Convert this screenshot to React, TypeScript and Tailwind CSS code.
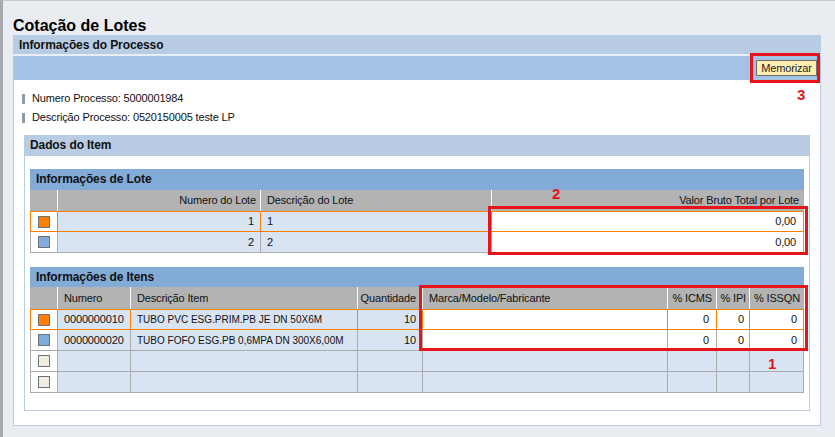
import React from "react";

type Sel = "orange" | "blue" | "empty";

function Square({ kind }: { kind: Sel }) {
  const fill =
    kind === "orange" ? "bg-[#ff7f00]" : kind === "blue" ? "bg-[#82abdc]" : "bg-[#f1ecdf]";
  return <span className={`block w-[12px] h-[12px] border border-[#6a707c] ${fill}`} />;
}

function Cell({
  w,
  children,
  first,
  align,
  bg,
  bc,
  pr,
  extra,
}: {
  w: string;
  children?: React.ReactNode;
  first?: boolean;
  align: "l" | "r" | "c";
  bg: string;
  bc: string;
  pr?: string;
  extra?: string;
}) {
  const justify = align === "r" ? "justify-end" : align === "c" ? "justify-center" : "justify-start";
  const pad = align === "r" ? pr ?? "pr-[6px]" : align === "l" ? "pl-[6px]" : "";
  return (
    <div
      className={`${w} shrink-0 h-full flex items-center ${justify} ${pad} ${bg} ${
        first ? "" : `border-l ${bc}`
      } whitespace-nowrap overflow-hidden ${extra ?? ""}`}
    >
      {children}
    </div>
  );
}

function App() {
  const loteCols = ["w-[26px]", "w-[203px]", "w-[231px]", "w-[312px]"];
  const itemCols = [
    "w-[26px]",
    "w-[73px]",
    "w-[227px]",
    "w-[65px]",
    "w-[245px]",
    "w-[49px]",
    "w-[33px]",
    "w-[54px]",
  ];
  const rowBg = "bg-[#d9e4f2]";
  const gray = "border-[#ababab]";
  const orange = "border-[#ff8000]";

  const items = [
    { sel: "orange" as Sel, num: "0000000010", desc: "TUBO PVC ESG.PRIM.PB JE DN 50X6M", q: "10", input: true },
    { sel: "blue" as Sel, num: "0000000020", desc: "TUBO FOFO ESG.PB 0,6MPA DN 300X6,00M", q: "10", input: true },
    { sel: "empty" as Sel, num: "", desc: "", q: "", input: false },
    { sel: "empty" as Sel, num: "", desc: "", q: "", input: false },
  ];

  return (
    <div className="relative w-[835px] h-[437px] overflow-hidden font-['Liberation_Sans',Arial,sans-serif] text-[11px] tracking-[-0.15px] text-[#111]">
      <div className="w-full h-full bg-[#e9edf1] border-t border-t-[#c4c6c8] border-l-[3px] border-l-[#a4a8ac]">
        <h1 className="pt-[15px] pl-[10px] text-[16px] font-bold leading-[19px] tracking-normal text-black">
          Cotação de Lotes
        </h1>
        <div className="ml-[10px] w-[808px]">
          {/* panel header */}
          <div className="h-[19px] bg-[#b8cde3] pl-[6px] flex items-center font-bold text-[12px] tracking-[-0.1px]">
            Informações do Processo
          </div>
          <div className="h-[2px] bg-[#e6eef7]" />
          <div className="h-[24px] bg-[#a4c2e3] flex items-center justify-end pr-[4px]">
            <button className="h-[16px] w-[61px] bg-[#fdefb2] border border-[#6f6f6f] text-[11px] leading-[14px] text-[#222] flex items-center justify-center">
              Memorizar
            </button>
          </div>
          {/* content */}
          <div className="bg-white border-x border-b border-[#b7cce3] pt-[9px] pb-[14px] px-[10px]">
            <div className="flex flex-col">
              <div className="h-[19px] flex items-center -ml-[2px]">
                <span className="w-[3px] h-[10px] bg-[#8f9aa9] mr-[7px]" />
                <span>Numero Processo: 5000001984</span>
              </div>
              <div className="h-[19px] flex items-center -ml-[2px]">
                <span className="w-[3px] h-[10px] bg-[#8f9aa9] mr-[7px]" />
                <span>Descrição Processo: 0520150005 teste LP</span>
              </div>
            </div>
            {/* Dados do Item */}
            <div className="mt-[8px] w-[786px]">
              <div className="h-[20px] bg-[#b8cde3] pl-[6px] flex items-center font-bold text-[12px] tracking-[-0.1px]">
                Dados do Item
              </div>
              <div className="bg-white border border-[#b7cce3] pt-[13px] pb-[17px] px-[5px]">
                {/* Lote table */}
                <div className="w-[774px] flex flex-col">
                  <div className="h-[21px] bg-[#82abd8] pl-[6px] flex items-center font-bold text-[12px] tracking-[-0.1px] pb-[1px]">
                    Informações de Lote
                  </div>
                  <div className="h-[21px] flex bg-[#b3b3b3] border-x border-[#b3b3b3]">
                    <Cell w={loteCols[0]} first align="c" bg="" bc="border-white" />
                    <Cell w={loteCols[1]} align="r" bg="" bc="border-white" pr="pr-[4px]">
                      Numero do Lote
                    </Cell>
                    <Cell w={loteCols[2]} align="l" bg="" bc="border-white">
                      Descrição do Lote
                    </Cell>
                    <Cell w={loteCols[3]} align="r" bg="" bc="border-white" pr="pr-[4px]">
                      Valor Bruto Total por Lote
                    </Cell>
                  </div>
                  {[
                    { sel: "orange" as Sel, n: "1" },
                    { sel: "blue" as Sel, n: "2" },
                  ].map((r, i) => {
                    const bc = i === 0 ? orange : gray;
                    return (
                      <div
                        key={i}
                        className={`h-[21px] flex border-x border-b ${bc} ${i === 0 ? "border-t" : ""}`}
                      >
                        <Cell w={loteCols[0]} first align="c" bg="bg-white" bc={bc}>
                          <Square kind={r.sel} />
                        </Cell>
                        <Cell w={loteCols[1]} align="r" bg={rowBg} bc={bc}>
                          {r.n}
                        </Cell>
                        <Cell w={loteCols[2]} align="l" bg={rowBg} bc={bc}>
                          {r.n}
                        </Cell>
                        <Cell w={loteCols[3]} align="r" bg="bg-white" bc={bc} pr="pr-[7px]">
                          0,00
                        </Cell>
                      </div>
                    );
                  })}
                </div>

                {/* Items table */}
                <div className="mt-[14px] w-[774px] flex flex-col">
                  <div className="h-[20px] bg-[#82abd8] pl-[6px] flex items-center font-bold text-[12px] tracking-[-0.1px]">
                    Informações de Itens
                  </div>
                  <div className="h-[22px] flex bg-[#b3b3b3] border-x border-[#b3b3b3]">
                    <Cell w={itemCols[0]} first align="c" bg="" bc="border-white" />
                    <Cell w={itemCols[1]} align="l" bg="" bc="border-white">
                      Numero
                    </Cell>
                    <Cell w={itemCols[2]} align="l" bg="" bc="border-white">
                      Descrição Item
                    </Cell>
                    <Cell w={itemCols[3]} align="r" bg="" bc="border-white" pr="pr-[6px]">
                      Quantidade
                    </Cell>
                    <Cell w={itemCols[4]} align="l" bg="" bc="border-white">
                      Marca/Modelo/Fabricante
                    </Cell>
                    <Cell w={itemCols[5]} align="r" bg="" bc="border-white" pr="pr-[4px]">
                      % ICMS
                    </Cell>
                    <Cell w={itemCols[6]} align="r" bg="" bc="border-white" pr="pr-[3px]">
                      % IPI
                    </Cell>
                    <Cell w={itemCols[7]} align="r" bg="" bc="border-white" pr="pr-[3px]">
                      % ISSQN
                    </Cell>
                  </div>
                  {items.map((r, i) => {
                    const bc = i === 0 ? orange : gray;
                    const inBg = r.input ? "bg-white" : rowBg;
                    return (
                      <div
                        key={i}
                        className={`h-[21px] flex border-x border-b ${bc} ${i === 0 ? "border-t" : ""}`}
                      >
                        <Cell w={itemCols[0]} first align="c" bg="bg-white" bc={bc}>
                          <Square kind={r.sel} />
                        </Cell>
                        <Cell w={itemCols[1]} align="l" bg={rowBg} bc={bc}>
                          {r.num}
                        </Cell>
                        <Cell
                          w={itemCols[2]}
                          align="l"
                          bg={rowBg}
                          bc={bc}
                          extra="text-[10px] tracking-[0px]"
                        >
                          {r.desc}
                        </Cell>
                        <Cell w={itemCols[3]} align="r" bg={rowBg} bc={bc}>
                          {r.q}
                        </Cell>
                        <Cell w={itemCols[4]} align="l" bg={inBg} bc={bc} />
                        <Cell w={itemCols[5]} align="r" bg={inBg} bc={bc} pr="pr-[7px]">
                          {r.input ? "0" : ""}
                        </Cell>
                        <Cell w={itemCols[6]} align="r" bg={inBg} bc={bc} pr="pr-[5px]">
                          {r.input ? "0" : ""}
                        </Cell>
                        <Cell w={itemCols[7]} align="r" bg={inBg} bc={bc} pr="pr-[6px]">
                          {r.input ? "0" : ""}
                        </Cell>
                      </div>
                    );
                  })}
                </div>
              </div>
            </div>
          </div>
        </div>
      </div>

      {/* annotations */}
      <div className="absolute left-[750px] top-[53px] w-[70px] h-[30px] border-[3px] border-[#e8141c]" />
      <div className="absolute left-[797px] top-[87px] text-[15px] leading-[15px] font-bold tracking-normal text-[#e8141c]">3</div>
      <div className="absolute left-[488px] top-[206px] w-[320px] h-[49px] border-[3px] border-[#e8141c]" />
      <div className="absolute left-[552px] top-[186px] text-[15px] leading-[15px] font-bold tracking-normal text-[#e8141c]">2</div>
      <div className="absolute left-[419px] top-[285px] w-[389px] h-[66px] border-[3px] border-[#e8141c]" />
      <div className="absolute left-[768px] top-[356px] text-[15px] leading-[15px] font-bold tracking-normal text-[#e8141c]">1</div>
    </div>
  );
}

export default App;
